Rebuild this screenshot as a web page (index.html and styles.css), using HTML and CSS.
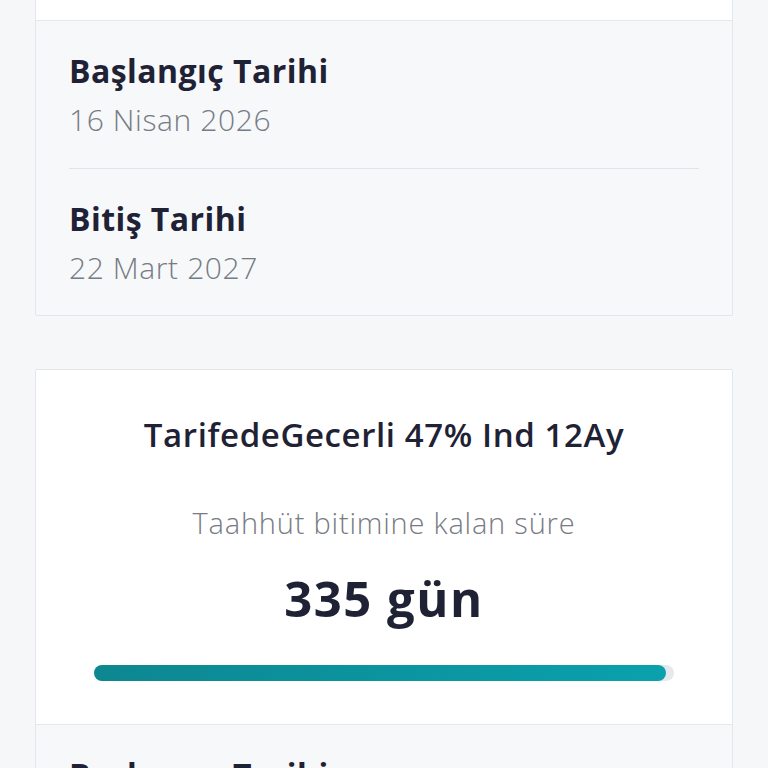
FILE: index.html
```html
<!DOCTYPE html>
<html lang="tr">
<head>
<meta charset="utf-8">
<link rel="stylesheet" href="styles.css">
</head>
<body>
<div class="page">
  <section class="card card-first">
    <div class="card-top card-top-cut"></div>
    <div class="card-details">
      <div class="detail">
        <div class="detail-label">Başlangıç Tarihi</div>
        <div class="detail-value">16 Nisan 2026</div>
      </div>
      <div class="detail">
        <div class="detail-label">Bitiş Tarihi</div>
        <div class="detail-value">22 Mart 2027</div>
      </div>
    </div>
  </section>

  <section class="card">
    <div class="card-top">
      <div class="plan-name">TarifedeGecerli 47% Ind 12Ay</div>
      <div class="remain-label">Taahhüt bitimine kalan süre</div>
      <div class="remain-value">335 gün</div>
      <div class="progress"><div class="progress-fill" style="width: 98.6%"></div></div>
    </div>
    <div class="card-details">
      <div class="detail">
        <div class="detail-label">Başlangıç Tarihi</div>
        <div class="detail-value">16 Nisan 2026</div>
      </div>
    </div>
  </section>
</div>
</body>
</html>
```
FILE: styles.css
```css
html, body {
  margin: 0;
  padding: 0;
  background: #f5f7f9;
  font-family: "Open Sans", "Noto Sans", sans-serif;
  overflow: hidden;
}
.page {
  height: 768px;
  padding: 0 35px;
  display: flex;
  flex-direction: column;
  gap: 53px;
}
.card {
  border: 1px solid #e3e6ea;
  background: #f6f8fa;
  border-radius: 2px;
  flex-shrink: 0;
}
.card-first {
  border-top: none;
  border-radius: 0 0 2px 2px;
}
.card-top {
  background: #ffffff;
  border-bottom: 1px solid #e4e7eb;
  display: flex;
  flex-direction: column;
  align-items: center;
  padding: 45px 58px 43px;
}
.card-top-cut {
  height: 20px;
  padding: 0;
}
.card-details {
  padding: 0 33px;
}
.detail {
  padding: 30px 0 28px;
  border-bottom: 1px solid #e1e4e8;
}
.detail:last-child {
  border-bottom: none;
  padding-bottom: 27px;
}
.detail-label {
  font-size: 32px;
  line-height: 40px;
  font-weight: 700;
  color: #1f2235;
  letter-spacing: 0.45px;
}
.detail-value {
  margin-top: 9px;
  font-size: 30px;
  line-height: 40px;
  font-weight: 300;
  color: #777b83;
  letter-spacing: 0.6px;
}
.plan-name {
  font-size: 33px;
  line-height: 40px;
  font-weight: 600;
  color: #1f2235;
  letter-spacing: 0.6px;
}
.remain-label {
  margin-top: 48px;
  font-size: 29px;
  line-height: 40px;
  font-weight: 300;
  color: #777b83;
  letter-spacing: 0.8px;
}
.remain-value {
  margin-top: 25px;
  font-size: 49px;
  line-height: 60px;
  font-weight: 700;
  color: #1f2235;
  letter-spacing: 1.5px;
}
.progress {
  margin-top: 37px;
  align-self: stretch;
  height: 16px;
  border-radius: 8px;
  background: #e5e9ee;
}
.progress-fill {
  height: 100%;
  border-radius: 8px;
  background: linear-gradient(90deg, #0d8790, #0aa1ad);
}
```
